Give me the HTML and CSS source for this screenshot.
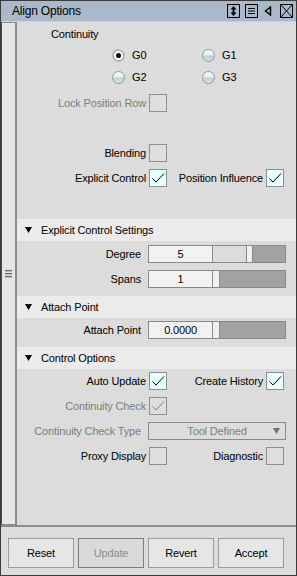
FILE: index.html
```html
<!DOCTYPE html>
<html lang="en">
<head>
    <meta charset="UTF-8">
    <meta name="viewport" content="width=device-width, initial-scale=1.0">
    <title>Align Options</title>
    <link rel="stylesheet" href="styles.css">
</head>
<body>

    <div class="window">
        <div class="titlebar">
            <span class="title">Align Options</span>
            <div class="title-icons">
                <svg class="ticon" width="13" height="14" viewBox="0 0 13 14">
                    <rect x="0.5" y="0.5" width="12" height="13" fill="none" stroke="#000"/>
                    <path d="M6.5 2 L3.5 5.5 H9.5 Z M6.5 12 L3.5 8.5 H9.5 Z" fill="#000"/>
                    <rect x="5.5" y="5" width="2" height="4" fill="#000"/>
                </svg>
                <svg class="ticon" width="13" height="14" viewBox="0 0 13 14">
                    <rect x="0.5" y="0.5" width="12" height="13" fill="none" stroke="#000"/>
                    <path d="M3 4.5 H10 M3 7 H10 M3 9.5 H10" stroke="#000"/>
                </svg>
                <svg class="ticon tri" width="8" height="14" viewBox="0 0 8 14">
                    <path d="M6.5 3 L1.5 7 L6.5 11 Z" fill="none" stroke="#000" stroke-width="1.4"/>
                </svg>
                <svg class="ticon" width="13" height="14" viewBox="0 0 13 14">
                    <rect x="0.5" y="0.5" width="12" height="13" fill="none" stroke="#000"/>
                    <path d="M1 1 L12 13 M12 1 L1 13" stroke="#000"/>
                </svg>
            </div>
        </div>

        <div class="body">
            <div class="strip">
                <span class="grip"></span>
                <span class="grip"></span>
                <span class="grip"></span>
            </div>

            <div class="main">
                <div class="top">
                    <div class="caption">Continuity</div>
                    <div class="radios">
                        <div class="radio on"><span class="circle"><span class="dot"></span></span>G0</div>
                        <div class="radio"><span class="circle"></span>G1</div>
                        <div class="radio"><span class="circle"></span>G2</div>
                        <div class="radio"><span class="circle"></span>G3</div>
                    </div>

                    <div class="opt-row lock">
                        <span class="lbl dim">Lock Position Row</span>
                        <span class="box"></span>
                    </div>
                    <div class="opt-row blending">
                        <span class="lbl">Blending</span>
                        <span class="box"></span>
                    </div>
                    <div class="opt-row explicit">
                        <span class="lbl">Explicit Control</span>
                        <span class="box checked"><svg width="16" height="16" viewBox="0 0 16 16"><path d="M2.5 8.5 L6 12 L14 3.5" fill="none" stroke="#000"/></svg></span>
                        <span class="lbl">Position Influence</span>
                        <span class="box checked"><svg width="16" height="16" viewBox="0 0 16 16"><path d="M2.5 8.5 L6 12 L14 3.5" fill="none" stroke="#000"/></svg></span>
                    </div>
                </div>

                <div class="section-head">
                    <svg class="arrow" width="7" height="6" viewBox="0 0 7 6"><path d="M0 0 H7 L3.5 6 Z" fill="#000"/></svg>
                    <span>Explicit Control Settings</span>
                </div>
                <div class="section-body">
                    <div class="field-row">
                        <span class="lbl">Degree</span>
                        <div class="slider-field">
                            <span class="value">5</span>
                            <span class="track">
                                <span class="light" style="width: 33px"></span>
                                <span class="handle"></span>
                                <span class="dark"></span>
                            </span>
                        </div>
                    </div>
                    <div class="field-row">
                        <span class="lbl">Spans</span>
                        <div class="slider-field">
                            <span class="value">1</span>
                            <span class="track">
                                <span class="light" style="width: 0px"></span>
                                <span class="handle"></span>
                                <span class="dark"></span>
                            </span>
                        </div>
                    </div>
                </div>

                <div class="section-head">
                    <svg class="arrow" width="7" height="6" viewBox="0 0 7 6"><path d="M0 0 H7 L3.5 6 Z" fill="#000"/></svg>
                    <span>Attach Point</span>
                </div>
                <div class="section-body">
                    <div class="field-row">
                        <span class="lbl">Attach Point</span>
                        <div class="slider-field">
                            <span class="value">0.0000</span>
                            <span class="track">
                                <span class="light" style="width: 0px"></span>
                                <span class="handle"></span>
                                <span class="dark"></span>
                            </span>
                        </div>
                    </div>
                </div>

                <div class="section-head">
                    <svg class="arrow" width="7" height="6" viewBox="0 0 7 6"><path d="M0 0 H7 L3.5 6 Z" fill="#000"/></svg>
                    <span>Control Options</span>
                </div>
                <div class="section-body last">
                    <div class="opt-row">
                        <span class="lbl">Auto Update</span>
                        <span class="box checked"><svg width="16" height="16" viewBox="0 0 16 16"><path d="M2.5 8.5 L6 12 L14 3.5" fill="none" stroke="#000"/></svg></span>
                        <span class="lbl">Create History</span>
                        <span class="box checked"><svg width="16" height="16" viewBox="0 0 16 16"><path d="M2.5 8.5 L6 12 L14 3.5" fill="none" stroke="#000"/></svg></span>
                    </div>
                    <div class="opt-row">
                        <span class="lbl dim">Continuity Check</span>
                        <span class="box disabled"><svg width="16" height="16" viewBox="0 0 16 16"><path d="M2.5 8.5 L6 12 L14 3.5" fill="none" stroke="#808080"/></svg></span>
                    </div>
                    <div class="field-row">
                        <span class="lbl dim">Continuity Check Type</span>
                        <div class="dropdown">
                            <span>Tool Defined</span>
                            <svg class="drop-arrow" width="7" height="6" viewBox="0 0 7 6"><path d="M0 0 H7 L3.5 6 Z" fill="#707070"/></svg>
                        </div>
                    </div>
                    <div class="opt-row">
                        <span class="lbl">Proxy Display</span>
                        <span class="box"></span>
                        <span class="lbl">Diagnostic</span>
                        <span class="box"></span>
                    </div>
                </div>
            </div>
        </div>

        <div class="footer">
            <button class="btn">Reset</button>
            <button class="btn disabled">Update</button>
            <button class="btn">Revert</button>
            <button class="btn">Accept</button>
        </div>
    </div>

</body>
</html>
```

FILE: styles.css
```css
* {
    box-sizing: border-box;
}

body {
    margin: 0;
    background: #dcdcdc;
    font-family: "Liberation Sans", Arial, sans-serif;
    font-size: 11px;
    letter-spacing: -0.15px;
    color: #000;
}

.window {
    width: 297px;
    height: 576px;
    border: 1px solid #3a3a3a;
    display: flex;
    flex-direction: column;
    background: #dcdcdc;
}

/* title bar */
.titlebar {
    height: 21px;
    flex: none;
    background: #a9b9c9;
    border-bottom: 1px solid #c8d2dc;
    display: flex;
    align-items: center;
    padding-left: 11px;
}

.title {
    font-size: 12px;
    letter-spacing: -0.2px;
    flex: 1;
}

.title-icons {
    display: flex;
    align-items: center;
    gap: 5px;
    padding-right: 3px;
}

.ticon {
    display: block;
}

.tri {
    margin: 0 3px 0 1px;
}

/* body */
.body {
    flex: 1;
    display: flex;
    min-height: 0;
}

.strip {
    width: 16px;
    flex: none;
    background: #e6e6e6;
    border-left: 1px solid #4a4a4a;
    border-top: 1px solid #8c8c8c;
    border-bottom: 1px solid #8c8c8c;
    border-right: 2px solid #8c8c8c;
    display: flex;
    flex-direction: column;
    justify-content: center;
    align-items: center;
    gap: 2px;
    padding-right: 1px;
}

.grip {
    width: 7px;
    height: 1px;
    background: #6e6e6e;
    box-shadow: 0 1px 0 #bcbcbc;
}

.main {
    flex: 1;
    display: flex;
    flex-direction: column;
}

.top {
    padding: 5px 0 32px;
}

.caption {
    line-height: 14px;
    padding-left: 34px;
}

.radios {
    display: grid;
    grid-template-columns: 90px auto;
    grid-auto-rows: 22px;
    padding-left: 95px;
    margin-top: 3px;
}

.radio {
    display: flex;
    align-items: center;
    gap: 7px;
}

.circle {
    width: 13px;
    height: 13px;
    border-radius: 50%;
    border: 1px solid #8f9c9c;
    background: linear-gradient(#f4fafa 0%, #e4eeee 45%, #bdd0d0 55%, #d8e6e6 100%);
    display: flex;
    align-items: center;
    justify-content: center;
}

.radio.on .circle {
    background: #fff;
    border: 2px solid #b4b4b4;
}

.dot {
    width: 5px;
    height: 5px;
    border-radius: 50%;
    background: #000;
}

/* checkbox rows */
.opt-row {
    display: grid;
    grid-template-columns: 129px 18px 93px 18px;
    column-gap: 3px;
    height: 18px;
    align-items: center;
}

.opt-row + .opt-row,
.opt-row + .field-row,
.field-row + .opt-row,
.field-row + .field-row {
    margin-top: 7px;
}

.lock {
    margin-top: 6px;
}

.top .blending {
    margin-top: 32px;
}

.top .explicit {
    margin-top: 7px;
}

.lbl {
    text-align: right;
    white-space: nowrap;
}

.dim {
    color: #7c7c7c;
}

.box {
    width: 18px;
    height: 18px;
    border: 1px solid #8e8e8e;
    background: #dedede;
    display: flex;
    align-items: center;
    justify-content: center;
}

.box.checked {
    background: #e8ffff;
}

/* sections */
.section-head {
    height: 22px;
    background: #ebebeb;
    display: flex;
    align-items: center;
    padding-left: 8px;
    gap: 9px;
}

.section-head .arrow {
    display: block;
}

.section-body {
    padding: 4px 0 8px;
}

.section-head + .section-body + .section-head + .section-body,
.section-body.last {
    padding-top: 3px;
}

.section-body.last {
    flex: 1;
}

.field-row {
    display: grid;
    grid-template-columns: 124px 138px;
    column-gap: 7px;
    height: 18px;
    align-items: center;
}

.slider-field {
    height: 18px;
    border: 1px solid #8a8a8a;
    display: flex;
}

.value {
    width: 64px;
    flex: none;
    background: #f2f2f2;
    border-right: 1px solid #8a8a8a;
    text-align: center;
    line-height: 16px;
}

.track {
    flex: 1;
    display: flex;
}

.track .light {
    background: #dcdcdc;
    flex: none;
}

.track .handle {
    width: 7px;
    flex: none;
    background: #f0f0f0;
    border-left: 1px solid #8a8a8a;
    border-right: 1px solid #8a8a8a;
}

.track .light[style="width: 0px"] + .handle {
    border-left: none;
}

.track .dark {
    flex: 1;
    background: #a2a2a2;
}

.dropdown {
    height: 18px;
    border: 1px solid #8a8a8a;
    background: #dcdcdc;
    color: #808080;
    display: flex;
    align-items: center;
    justify-content: center;
    position: relative;
}

.drop-arrow {
    position: absolute;
    right: 5px;
    top: 5px;
}

/* footer */
.footer {
    height: 50px;
    flex: none;
    border-top: 2px solid #8c8c8c;
    display: flex;
    gap: 4px;
    padding: 11px 0 0 7px;
}

.btn {
    width: 66px;
    height: 30px;
    border: 1px solid #9c9c9c;
    background: #e6e6e6;
    font-family: inherit;
    font-size: 11px;
    letter-spacing: -0.15px;
    color: #000;
    padding: 0;
}

.btn.disabled {
    background: #dadada;
    border-color: #7e7e7e;
    color: #8c8c8c;
}
```
